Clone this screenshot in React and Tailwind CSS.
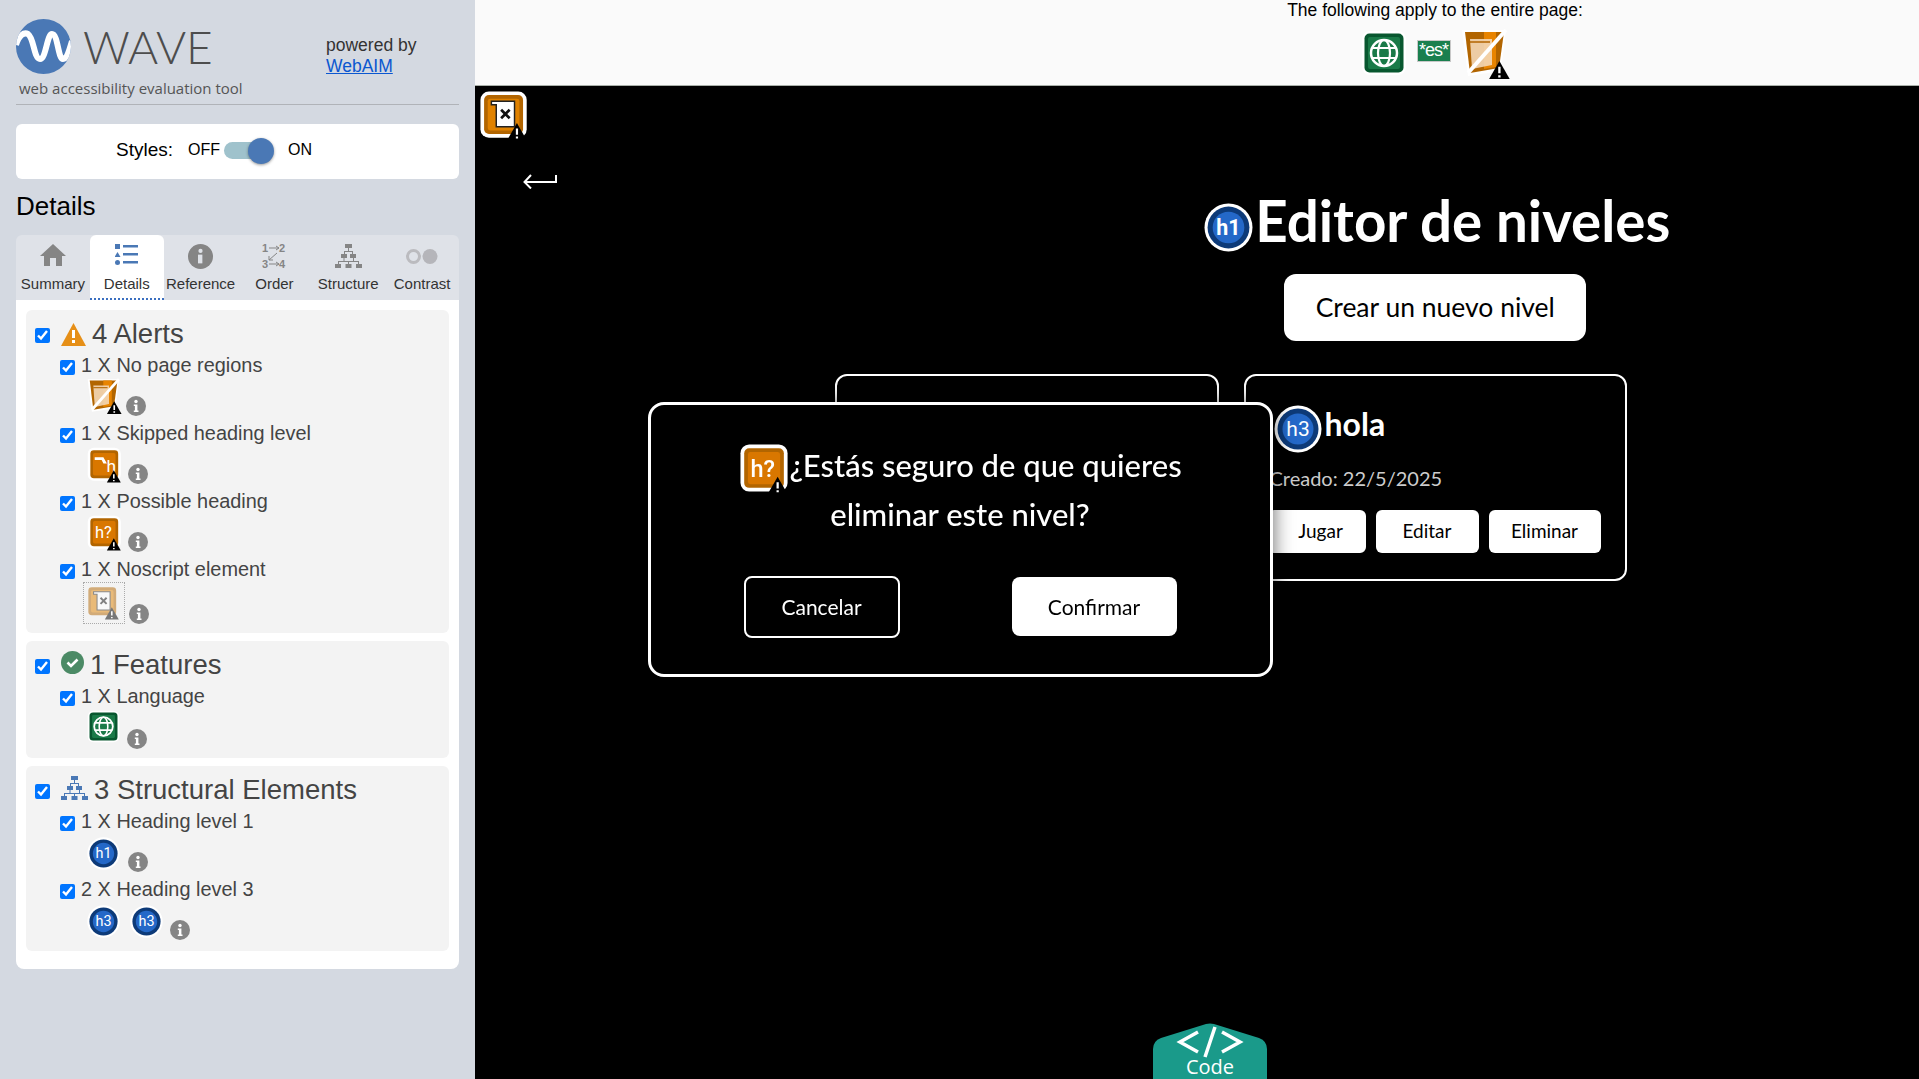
import React from "react";

function Warn({ x = 0, y = 0, s = 1, fill = "#000" }) {
  return (
    <g transform={`translate(${x} ${y}) scale(${s})`}>
      <path d="M0 14 L8 0 L16 14 Z" fill={fill} />
      <path d="M8 4.5 V9.5 M8 11 V12.6" stroke="#fff" strokeWidth="1.8" />
    </g>
  );
}

function Square({ outer, inner, ring = "#fff", children }) {
  return (
    <>
      <rect x="2" y="2" width="38" height="38" rx="7" fill={ring} />
      <rect x="5" y="5" width="32" height="32" rx="4" fill={outer} />
      <rect x="8" y="8" width="26" height="26" rx="2" fill={inner} />
      {children}
    </>
  );
}

function HeadingBadge({ label, className }) {
  return (
    <svg viewBox="0 0 48 48" className={className}>
      <circle cx="24" cy="24" r="23.5" fill="#fff" />
      <circle cx="24" cy="24" r="20.5" fill="#0d3a78" />
      <circle cx="24" cy="24" r="15.5" fill="#2468c8" />
      <text x="24" y="31" textAnchor="middle" fontSize="21" fill="#fff" fontFamily="Roboto, sans-serif">{label}</text>
    </svg>
  );
}

function PossibleHeading({ className }) {
  return (
    <svg viewBox="0 0 46 46" className={className}>
      <Square outer="#b26500" inner="#d97700">
        <text x="20" y="28" textAnchor="middle" fontSize="19" fill="#fff" fontFamily="Roboto, sans-serif">h?</text>
      </Square>
      <Warn x="24" y="28" />
    </svg>
  );
}

function SkippedHeading({ className }) {
  return (
    <svg viewBox="0 0 46 46" className={className}>
      <Square outer="#b26500" inner="#d97700">
        <path d="M10 13 L20 13 L24 20 L20 20 L18 16 L10 16 Z" fill="#fff" />
        <text x="29" y="30" textAnchor="middle" fontSize="20" fill="#fff" fontFamily="Roboto, sans-serif">h</text>
      </Square>
      <Warn x="24" y="28" />
    </svg>
  );
}

function NoscriptIcon({ className, faded }) {
  return (
    <svg viewBox="0 0 46 46" className={className}>
      <g opacity={faded ? 0.5 : 1}>
        <Square outer="#b26500" inner="#e08200" ring={faded ? "transparent" : "#fff"}>
          <path d="M11 10 H30 V31 H15 V13 H11 Z" fill="#fff" stroke="#222" strokeWidth="1.2" />
          <path d="M19 17 L26 24 M26 17 L19 24" stroke="#111" strokeWidth="2.2" />
        </Square>
      </g>
      <Warn x="24" y="28" fill={faded ? "#777" : "#000"} />
    </svg>
  );
}

function NoRegions({ className }) {
  return (
    <svg viewBox="0 0 50 52" className={className}>
      <path d="M2 3 H46 L41 44 L8 49 Z" fill="#fff" />
      <path d="M5 5 H44 L39 41 L10 46 Z" fill="#b26500" />
      <path d="M24 5 H36 V40 L24 42 Z" fill="#e88400" />
      <path d="M10 12 H32 V38 L12 42 Z" fill="#f3d7b6" opacity="0.9" />
      <path d="M10 15 H30" stroke="#b26500" strokeWidth="1.5" />
      <path d="M8 46 L46 3" stroke="#fff" strokeWidth="4" />
      <Warn x="29" y="34" s={1.3} />
    </svg>
  );
}

function GlobeIcon({ className }) {
  return (
    <svg viewBox="0 0 46 46" className={className}>
      <rect x="1" y="1" width="44" height="44" rx="8" fill="#fff" />
      <rect x="3.5" y="3.5" width="39" height="39" rx="5" fill="#08572f" />
      <rect x="7" y="7" width="32" height="32" rx="2" fill="#1a7a48" />
      <circle cx="23" cy="23" r="13" fill="none" stroke="#fff" strokeWidth="2.5" />
      <ellipse cx="23" cy="23" rx="6" ry="13" fill="none" stroke="#fff" strokeWidth="2.2" />
      <path d="M11 18 H35 M11 28 H35" stroke="#fff" strokeWidth="2.2" />
    </svg>
  );
}

function InfoDot({ className = "" }) {
  return (
    <svg viewBox="0 0 20 20" className={`w-5 h-5 shrink-0 ${className}`}>
      <circle cx="10" cy="10" r="10" fill="#858585" />
      <circle cx="10" cy="5.5" r="1.7" fill="#fff" />
      <path d="M7.8 8.5 H11.4 V14.5 H12.5 V16 H7.8 V14.5 H8.9 V10 H7.8 Z" fill="#fff" />
    </svg>
  );
}

function TreeIcon({ className, fill }) {
  return (
    <svg viewBox="0 0 27 24" className={className} fill={fill}>
      <rect x="10" y="0" width="7" height="4" />
      <rect x="6" y="10" width="6" height="4" />
      <rect x="15" y="10" width="6" height="4" />
      <rect x="0" y="20" width="6" height="4" />
      <rect x="10.5" y="20" width="6" height="4" />
      <rect x="21" y="20" width="6" height="4" />
      <path d="M13 4 V7 H9 V10 H10 V8 H17 V10 H18 V7 H14 V4 Z M3 20 V17 H8.5 V14 H9.5 V17 H18 V14 H19 V17 H24 V20 H23 V18 H14 V20 H13 V18 H4 V20 Z" />
    </svg>
  );
}

function Tab({ label, active, children }) {
  return (
    <div className={`w-[74px] h-[65px] flex flex-col items-center rounded-t-md ${active ? "bg-white border-b-2 border-dotted border-[#3b6fc0]" : ""}`}>
      <div className="h-[39px] pt-[9px] flex items-start justify-center">{children}</div>
      <span className="text-[15px] leading-[20px] text-[#333] whitespace-nowrap">{label}</span>
    </div>
  );
}

function Row({ text, children }) {
  return (
    <div className="h-[68px]">
      <div className="flex items-center h-[22px] pl-[34px]">
        <input type="checkbox" defaultChecked readOnly className="w-[15px] h-[15px] m-0 mt-1" />
        <span className="ml-[6px] text-[19.9px] leading-[22px] text-[#444] whitespace-nowrap">{text}</span>
      </div>
      <div className="flex items-end pl-[62px] h-[46px] pb-[6px]">{children}</div>
    </div>
  );
}

function Section({ icon, title, className, children }) {
  return (
    <section className={`bg-[#f3f3f3] rounded-md ${className}`}>
      <div className="flex items-center h-[34px] pl-[9px] gap-[11px] mb-[3px]">
        <input type="checkbox" defaultChecked readOnly className="w-[15px] h-[15px] m-0 mt-[2px]" />
        <div className="flex items-center gap-[6px]">
          {icon}
          <h3 className="text-[27.5px] leading-[34px] text-[#444] whitespace-nowrap">{title}</h3>
        </div>
      </div>
      {children}
    </section>
  );
}

function Sidebar() {
  return (
    <aside className="w-[475px] shrink-0 h-full bg-[#d4d9e1] px-4 font-['Liberation_Sans',sans-serif]">
      <div className="h-[105px] border-b border-[#b0b3b8] relative">
        <div className="flex items-start pt-[19px]">
          <svg viewBox="0 0 55 55" className="w-[55px] h-[55px] shrink-0">
            <defs>
              <clipPath id="logo-clip"><circle cx="27.5" cy="27.5" r="27.5" /></clipPath>
            </defs>
            <circle cx="27.5" cy="27.5" r="27.5" fill="#4a78b5" />
            <path clipPath="url(#logo-clip)" d="M0 26 C3 16 8 13 12 15 C18 19 18 40 24 40 C30 40 31 15 36 15 C42 15 42 40 47 40 C51 40 53 32 56 22" fill="none" stroke="#fff" strokeWidth="6" />
          </svg>
          <span className="ml-3 mt-[3px] text-[46px] leading-[50px] font-light text-[#4d4d4d] font-['Lato',sans-serif]">WAVE</span>
          <div className="ml-auto mr-[14px] mt-[16px] w-[119px] text-[17.5px] leading-[20.5px] text-[#333]">
            powered by
            <br />
            <a href="#" className="text-[#0b57d0] underline">WebAIM</a>
          </div>
        </div>
        <p className="absolute left-[3px] top-[78px] text-[15px] leading-[20px] text-[#555] font-['Open_Sans',sans-serif]">web accessibility evaluation tool</p>
      </div>
      <div className="mt-[19px] h-[55px] bg-white rounded-md flex items-center justify-center pr-[47px] text-black">
        <span className="text-[19px] -mt-[2px]">Styles:</span>
        <span className="ml-[15px] text-[16px] -mt-[4px]">OFF</span>
        <div className="ml-1 w-[50px] h-[26px] relative flex items-center -mt-[2px]">
          <div className="w-[38px] h-[17px] rounded-full bg-[#9fc2cc]" />
          <div className="absolute left-[24px] top-0 w-[26px] h-[26px] rounded-full bg-[#4a78b5] shadow-[0_1px_3px_rgba(0,0,0,0.4)]" />
        </div>
        <span className="ml-[14px] text-[16px] -mt-[4px]">ON</span>
      </div>
      <h2 className="mt-[4px] mb-[6px] text-[26px] leading-[46px] text-black">Details</h2>
      <div className="bg-[#dfe2e8] rounded-t-md flex h-[65px]">
        <Tab label="Summary">
          <svg viewBox="0 0 26 22" className="w-[26px] h-[22px] fill-[#858585]"><path d="M13 0 L26 12 H22 V22 H16 V14 H10 V22 H4 V12 H0 Z" /></svg>
        </Tab>
        <Tab label="Details" active>
          <svg viewBox="0 0 24 22" className="w-6 h-[22px] fill-[#4a78b5]">
            <rect x="0" y="0" width="5" height="5" />
            <path d="M2.5 8 L5.5 13 H-0.5 Z" />
            <circle cx="2.5" cy="18.5" r="2.5" />
            <rect x="8" y="1" width="15" height="2.5" />
            <rect x="8" y="9" width="15" height="2.5" />
            <rect x="8" y="17" width="15" height="2.5" />
          </svg>
        </Tab>
        <Tab label="Reference">
          <svg viewBox="0 0 20 20" className="w-[25px] h-[25px]">
            <circle cx="10" cy="10" r="10" fill="#858585" />
            <circle cx="10" cy="5.5" r="1.7" fill="#dfe2e8" />
            <path d="M8 8.5 H11.5 V15.5 H8 Z" fill="#dfe2e8" />
          </svg>
        </Tab>
        <Tab label="Order">
          <svg viewBox="0 0 24 26" className="w-6 h-[26px] -mt-[1px]">
            <text x="0" y="9" fontSize="11" fontWeight="700" fill="#858585">1</text>
            <text x="17" y="9" fontSize="11" fontWeight="700" fill="#858585">2</text>
            <text x="0" y="25" fontSize="11" fontWeight="700" fill="#858585">3</text>
            <text x="17" y="25" fontSize="11" fontWeight="700" fill="#858585">4</text>
            <path d="M7 5 H17 M14 3 L17 5 L14 7 M7 21 H17 M14 19 L17 21 L14 23 M15 10 L7 17 M7 13 V17 H11" fill="none" stroke="#858585" />
          </svg>
        </Tab>
        <Tab label="Structure">
          <TreeIcon className="w-[27px] h-[24px]" fill="#858585" />
        </Tab>
        <Tab label="Contrast">
          <svg viewBox="0 0 32 15" className="w-8 h-[15px] mt-[5px]">
            <circle cx="7.5" cy="7.5" r="6" fill="none" stroke="#bbbbbf" strokeWidth="3" />
            <circle cx="24" cy="7.5" r="7.5" fill="#b5b5ba" />
          </svg>
        </Tab>
      </div>
      <div className="bg-white rounded-b-lg px-[10px] pt-[10px] pb-[18px] flex flex-col gap-2">
        <Section
          className="h-[323px] pt-[7px]"
          title="4 Alerts"
          icon={
            <svg viewBox="0 0 25 23" className="w-[25px] h-[23px]">
              <path d="M12.5 0 L25 23 H0 Z" fill="#e68f17" />
              <path d="M12.5 7 V15 M12.5 17 V20" stroke="#fff" strokeWidth="3" />
            </svg>
          }
        >
          <Row text="1 X No page regions">
            <NoRegions className="w-[36px] h-[37px] mb-[2px] -ml-[2px] shrink-0" />
            <InfoDot className="ml-[4px]" />
          </Row>
          <Row text="1 X Skipped heading level">
            <SkippedHeading className="w-[40px] h-[40px] -mb-[2px] -ml-[2px]" />
            <InfoDot className="ml-[2px]" />
          </Row>
          <Row text="1 X Possible heading">
            <PossibleHeading className="w-[40px] h-[40px] -mb-[2px] -ml-[2px]" />
            <InfoDot className="ml-[2px]" />
          </Row>
          <Row text="1 X Noscript element">
            <div className="-ml-[5px] -mb-[4px] w-[42px] h-[42px] border border-dotted border-[#aaa] flex items-center justify-center shrink-0">
              <NoscriptIcon faded className="w-[40px] h-[40px] shrink-0" />
            </div>
            <InfoDot className="ml-[4px] -mb-[4px]" />
          </Row>
        </Section>
        <Section
          className="h-[117px] pt-[7px]"
          title="1 Features"
          icon={
            <svg viewBox="0 0 23 23" className="w-[23px] h-[23px] -mt-[6px]">
              <circle cx="11.5" cy="11.5" r="11.5" fill="#4b8a65" />
              <path d="M6.5 11.5 L10 15 L16.5 8.5" fill="none" stroke="#fff" strokeWidth="2.6" />
            </svg>
          }
        >
          <Row text="1 X Language">
            <GlobeIcon className="w-[33px] h-[33px] mb-[4px] -ml-[1px]" />
            <InfoDot className="ml-[7px] -mb-[2px]" />
          </Row>
        </Section>
        <Section
          className="h-[185px] pt-[7px]"
          title="3 Structural Elements"
          icon={<TreeIcon className="w-[27px] h-[24px] -mt-[4px]" fill="#4a78b5" />}
        >
          <Row text="1 X Heading level 1">
            <HeadingBadge label="h1" className="w-[33px] h-[33px] mb-[2px] -ml-[1px]" />
            <InfoDot className="ml-[8px]" />
          </Row>
          <Row text="2 X Heading level 3">
            <HeadingBadge label="h3" className="w-[33px] h-[33px] mb-[2px] -ml-[1px]" />
            <HeadingBadge label="h3" className="w-[33px] h-[33px] mb-[2px] ml-[10px]" />
            <InfoDot className="ml-[7px]" />
          </Row>
        </Section>
      </div>
    </aside>
  );
}

function TopBar() {
  return (
    <div className="h-[86px] shrink-0 bg-[#fafafa] border-b border-[#a9b0a9] flex flex-col font-['Liberation_Sans',sans-serif]">
      <div className="w-[968px] self-end flex flex-col items-center">
        <p className="text-[17.5px] leading-[20px] text-black whitespace-nowrap">The following apply to the entire page:</p>
        <div className="flex items-center gap-[9px] mt-[6px] h-[54px]">
          <GlobeIcon className="w-[46px] h-[46px]" />
          <span className="w-[34px] h-[22px] bg-[#1a7f4e] border border-[#c8c8c8] text-white text-[18px] tracking-[-1px] leading-[18px] text-center whitespace-nowrap -mt-[4px] ml-[1px]">*es*</span>
          <NoRegions className="w-[50px] h-[52px]" />
        </div>
      </div>
    </div>
  );
}

function CodeTab() {
  return (
    <div className="absolute bottom-0 left-[678px] w-[114px] h-[56px]">
      <svg viewBox="0 0 114 56" className="absolute inset-0 w-full h-full">
        <path d="M0 26 Q0 18 8 15 L53 1 Q57 0 61 1 L106 15 Q114 18 114 26 V56 H0 Z" fill="#1a9a8a" />
        <path d="M45 9 L27 19 L45 29 M69 9 L87 19 L69 29 M62 4 L52 34" fill="none" stroke="#fff" strokeWidth="3.5" />
      </svg>
      <span className="absolute left-0 right-0 top-[33px] text-center text-white text-[20px] leading-[22px] font-['Open_Sans',sans-serif]">Code</span>
    </div>
  );
}

function LevelCard({ children }) {
  return <div className="h-[207px] border-2 border-white rounded-xl px-6 py-6 overflow-hidden">{children}</div>;
}

export default function App() {
  return (
    <div className="flex w-full h-screen overflow-hidden bg-black">
      <Sidebar />
      <div className="flex-1 flex flex-col min-w-0">
        <TopBar />
        <main className="flex-1 relative bg-black text-white font-['Lato',cursive]">
          <div className="ml-[3px] mt-[3px] w-[56px] h-[56px]">
            <NoscriptIcon className="w-[56px] h-[56px]" />
          </div>
          <svg viewBox="0 0 34 16" className="ml-[48px] mt-[28px] w-[34px] h-[16px]">
            <path d="M33 2 V9 H2 M8 2 L1.5 9 L8 15.5" fill="none" stroke="#fff" strokeWidth="2" />
          </svg>
          <div className="ml-[360px] w-[792px] grid grid-cols-2 gap-x-[25px] mt-[13px]">
            <h1 className="col-start-2 flex justify-center items-center h-[51px] pl-[4px] whitespace-nowrap text-[56.5px] font-bold">
              <HeadingBadge label="h1" className="w-[49px] h-[49px] shrink-0 mr-[2px] -mt-[1px]" />
              <span className="-mt-[14px]">Editor de niveles</span>
            </h1>
            <div className="col-start-2 flex justify-center mt-[21px]">
              <button className="w-[302px] h-[67px] bg-white text-black rounded-xl text-[26.5px]">Crear un nuevo nivel</button>
            </div>
            <div className="col-span-2 mt-[33px] grid grid-cols-2 gap-x-[25px]">
              <LevelCard />
              <LevelCard>
                <div className="flex items-center h-[48px] mt-[5px] ml-[4px]">
                  <HeadingBadge label="h3" className="w-[48px] h-[48px] shrink-0 mr-[3px]" />
                  <h3 className="text-[32px] font-bold -mt-[10px]">hola</h3>
                </div>
                <p className="mt-[8px] text-[20px] leading-[34px] text-[#cccccc] whitespace-nowrap">Creado: 22/5/2025</p>
                <div className="flex gap-[10px] mt-[15px] text-black text-[19px] -ml-[2px]">
                  <button className="w-[98px] h-[43px] bg-white rounded-md pl-[8px]">Jugar</button>
                  <button className="w-[103px] h-[43px] bg-white rounded-md">Editar</button>
                  <button className="w-[112px] h-[43px] bg-white rounded-md">Eliminar</button>
                </div>
              </LevelCard>
            </div>
          </div>
          <CodeTab />
        </main>
      </div>
      <div className="fixed inset-0 flex items-center justify-center font-['Lato',cursive] text-white">
        <div className="w-[625px] h-[275px] ml-[1px] bg-black border-[3px] border-white rounded-2xl shadow-[0_0_20px_rgba(0,0,0,0.6)] px-[76px] pt-[37px]">
          <h3 className="text-[31px] leading-[47px] text-center font-medium -mx-[12px]">
            <PossibleHeading className="inline-block w-[57px] h-[57px] align-middle -my-[8px] -mt-[6px] -mr-[6px]" />
            ¿Estás seguro de que quieres eliminar este nivel?
          </h3>
          <div className="flex justify-between items-center mt-[38px] pl-[17px] pr-[17px] text-[21px]">
            <button className="w-[156px] h-[62px] border-2 border-white rounded-lg bg-black text-white">Cancelar</button>
            <button className="w-[165px] h-[59px] bg-white text-black rounded-lg">Confirmar</button>
          </div>
        </div>
      </div>
    </div>
  );
}
